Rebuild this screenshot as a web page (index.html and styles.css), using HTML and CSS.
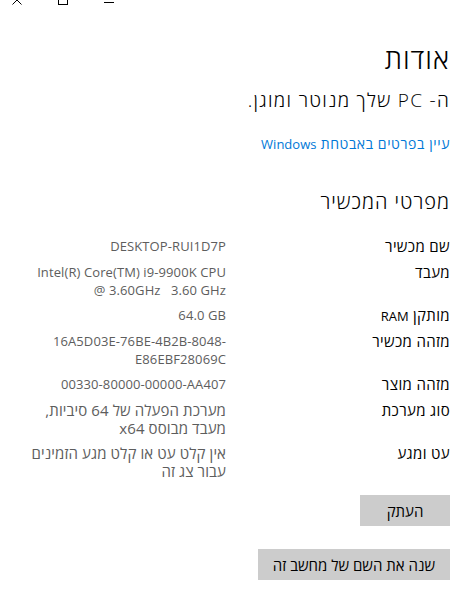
FILE: index.html
```html
<!DOCTYPE html>
<html lang="he" dir="rtl">
<head>
    <meta charset="utf-8">
    <title>אודות</title>
    <link rel="stylesheet" href="styles.css">
</head>
<body>
    <div class="caption-bar">
        <span class="caption-btn">
            <svg width="10" height="10" viewBox="0 0 10 10"><path d="M0.5 0.5 L9.5 9.5 M9.5 0.5 L0.5 9.5" stroke="#000" stroke-width="1" fill="none"/></svg>
        </span>
        <span class="caption-btn">
            <svg width="10" height="10" viewBox="0 0 10 10"><rect x="0.5" y="0.5" width="9" height="9" stroke="#000" stroke-width="1" fill="none"/></svg>
        </span>
        <span class="caption-btn">
            <svg width="10" height="10" viewBox="0 0 10 10"><path d="M0 7.5 H10" stroke="#000" stroke-width="1" fill="none"/></svg>
        </span>
    </div>
    <div class="page">
        <h1 class="page-title">אודות</h1>
        <p class="status">ה- PC שלך מנוטר ומוגן.</p>
        <a class="link" href="#">עיין בפרטים באבטחת <span class="lat-run">Windows</span></a>

        <h2 class="section-title">מפרטי המכשיר</h2>
        <div class="specs">
            <div class="spec-label">שם מכשיר</div>
            <div class="spec-value lat" dir="ltr">DESKTOP-RUI1D7P</div>

            <div class="spec-label">מעבד</div>
            <div class="spec-value lat" dir="ltr">Intel(R) Core(TM) i9-9900K CPU<br>@ 3.60GHz&nbsp;&nbsp; 3.60 GHz</div>

            <div class="spec-label">מותקן <span class="lat-run">RAM</span></div>
            <div class="spec-value lat" dir="ltr">64.0 GB</div>

            <div class="spec-label">מזהה מכשיר</div>
            <div class="spec-value lat" dir="ltr">16A5D03E-76BE-4B2B-8048-<br>E86EBF28069C</div>

            <div class="spec-label">מזהה מוצר</div>
            <div class="spec-value lat" dir="ltr">00330-80000-00000-AA407</div>

            <div class="spec-label">סוג מערכת</div>
            <div class="spec-value">מערכת הפעלה של 64 סיביות,<br>מעבד מבוסס x64</div>

            <div class="spec-label">עט ומגע</div>
            <div class="spec-value">אין קלט עט או קלט מגע הזמינים<br>עבור צג זה</div>
        </div>

        <div class="actions">
            <button class="btn btn-copy" type="button">העתק</button>
            <button class="btn" type="button">שנה את השם של מחשב זה</button>
        </div>
    </div>
</body>
</html>
```
FILE: styles.css
```css
body {
    margin: 0;
    background-color: #fff;
    color: #000;
    font-family: "Open Sans", "Liberation Sans", "DejaVu Sans", sans-serif;
    font-size: 15px;
    letter-spacing: 0.35px;
}
/* latin runs in Segoe are narrower than the hebrew ones */
.lat {
    font-size: 13px;
    letter-spacing: 0;
}
.lat-run {
    font-size: 13px;
    line-height: 1;
    letter-spacing: 0;
}
.caption-bar {
    direction: ltr;
    display: flex;
    align-items: flex-end;
    height: 6px;
    margin-left: -6px;
    overflow: hidden;
}
.caption-btn {
    display: flex;
    justify-content: center;
    width: 46px;
    height: 11px;
}
.page {
    padding: 0 14px;
}
.page-title {
    margin: 34px 0 0 0;
    font-size: 28px;
    font-weight: 300;
    line-height: 36px;
    letter-spacing: 1px;
}
.status {
    margin: 11px 0 0 0;
    font-size: 19px;
    font-weight: 300;
    line-height: 26px;
    letter-spacing: 1.3px;
}
.link {
    display: block;
    margin-top: 21px;
    color: #0078d7;
    font-size: 14px;
    letter-spacing: 0.6px;
    text-decoration: none;
    line-height: 20px;
}
.section-title {
    margin: 34px 0 0 0;
    font-size: 20px;
    font-weight: 300;
    line-height: 28px;
    letter-spacing: 1px;
}
.specs {
    display: grid;
    grid-template-columns: 224px 210px;
    row-gap: 7.5px;
    margin-top: 21px;
    line-height: 18px;
}
.spec-value {
    color: #5d5d5d;
    letter-spacing: 0.1px;
}
.spec-value.lat {
    text-align: right;
    letter-spacing: 0.1px;
}
.actions {
    display: flex;
    flex-direction: column;
    align-items: flex-start;
    gap: 23px;
    margin-top: 15px;
}
.btn {
    height: 31px;
    padding: 0 15px;
    border: none;
    background-color: #cccccc;
    color: #000;
    font-family: inherit;
    font-size: 15px;
    letter-spacing: 0;
}
.btn-copy {
    width: 90px;
}
```
